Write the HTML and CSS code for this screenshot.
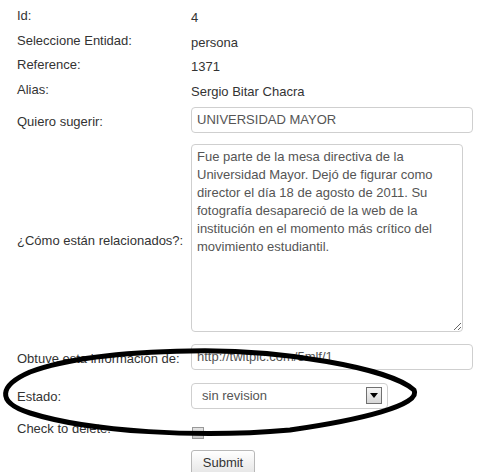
FILE: index.html
```html
<!DOCTYPE html>
<html>
<head>
<meta charset="utf-8">
<link rel="stylesheet" href="styles.css">
</head>
<body>
<form class="form">
  <div class="row text-row"><span class="label">Id:</span><span class="value">4</span></div>
  <div class="row text-row"><span class="label">Seleccione Entidad:</span><span class="value">persona</span></div>
  <div class="row text-row"><span class="label">Reference:</span><span class="value">1371</span></div>
  <div class="row text-row"><span class="label">Alias:</span><span class="value">Sergio Bitar Chacra</span></div>
  <div class="row r-sugerir"><label class="label">Quiero sugerir:</label><input class="input" type="text" value="UNIVERSIDAD MAYOR"></div>
  <div class="row r-textarea"><label class="label">¿Cómo están relacionados?:</label><textarea class="textarea">Fue parte de la mesa directiva de la Universidad Mayor. Dejó de figurar como director el día 18 de agosto de 2011. Su fotografía desapareció de la web de la institución en el momento más crítico del movimiento estudiantil.</textarea></div>
  <div class="row r-url"><label class="label">Obtuve esta información de:</label><input class="input" type="text" value="http://twitpic.com/5mlf/1"></div>
  <div class="row r-estado"><label class="label">Estado:</label><div class="select"><span class="select-text">sin revision</span><span class="arrow"><svg width="8" height="5" viewBox="0 0 8 5"><path d="M0 0 H8 L4 5 Z" fill="#000"/></svg></span></div></div>
  <div class="row r-check"><label class="label">Check to delete:</label><span class="checkbox"></span></div>
  <div class="row r-submit"><span class="label"></span><button class="submit" type="button">Submit</button></div>
</form>
<svg class="ellipse" width="477" height="472" viewBox="0 0 477 472">
  <path d="M190 351 C280 349 390 368 414 390 C422 405 360 420 290 430 C200 438 90 432 30 413 C-5 402 0 385 30 372 C70 357 130 352 190 351 Z" fill="none" stroke="#000" stroke-width="5" stroke-linejoin="round"/>
</svg>
</body>
</html>
```
FILE: styles.css
```css
body {
  margin: 0;
  background: #fff;
  font-family: "Liberation Sans", Arial, sans-serif;
  font-size: 13px;
  color: #333;
  position: relative;
  width: 477px;
  height: 472px;
  overflow: hidden;
}
.form {
  padding: 8px 0 0 17px;
  display: flex;
  flex-direction: column;
}
.row {
  display: flex;
  align-items: center;
}
.label {
  width: 174px;
  flex: none;
  line-height: 15px;
}
.text-row {
  height: 24.67px;
  align-items: flex-start;
}
.value {
  padding-top: 2px;
  line-height: 15px;
}
.input {
  box-sizing: border-box;
  width: 282px;
  height: 26px;
  border: 1px solid #cfcfcf;
  border-radius: 4px;
  padding: 0 5px;
  margin: 0;
  font-family: "Liberation Sans", Arial, sans-serif;
  font-size: 13px;
  color: #555;
  background: #fff;
  outline: none;
}
.r-sugerir { margin-bottom: 11px; }
.r-sugerir .label { margin-top: 3px; }
.textarea {
  box-sizing: border-box;
  width: 272px;
  height: 188px;
  border: 1px solid #cfcfcf;
  border-radius: 4px;
  padding: 3px 5px;
  margin: 0;
  font-family: "Liberation Sans", Arial, sans-serif;
  font-size: 13px;
  line-height: 18px;
  color: #555;
  background: #fff;
  outline: none;
  overflow: hidden;
}
.r-textarea { margin-bottom: 12px; }
.r-textarea .label { margin-top: 5px; }
.r-url { margin-bottom: 13px; }
.r-url .label { margin-top: 3px; }
.select {
  box-sizing: border-box;
  width: 197px;
  height: 26px;
  border: 1px solid #cfcfcf;
  border-radius: 4px;
  padding: 0 5px 0 10px;
  display: flex;
  align-items: center;
  justify-content: space-between;
  color: #555;
}
.arrow {
  box-sizing: border-box;
  width: 16px;
  height: 17px;
  border: 1px solid #707070;
  background: linear-gradient(#f6f6f6, #d6d6d6);
  display: flex;
  align-items: center;
  justify-content: center;
}
.r-estado .label { margin-top: 2px; }
.r-check {
  margin-top: 12px;
  align-items: flex-start;
}
.checkbox {
  box-sizing: border-box;
  width: 12px;
  height: 12px;
  margin-top: 6px;
  margin-left: 1px;
  border: 1px solid #999;
  background: linear-gradient(#e4e4e4, #c8c8c8);
}
.r-submit { margin-top: 11px; }
.submit {
  box-sizing: border-box;
  width: 64px;
  height: 26px;
  margin: 0;
  padding: 0;
  border: 1px solid #b8b8b8;
  border-radius: 3px;
  background: linear-gradient(#ffffff, #e4e4e4);
  font-family: "Liberation Sans", Arial, sans-serif;
  font-size: 13px;
  color: #333;
}
.ellipse {
  position: absolute;
  left: 0;
  top: 0;
  pointer-events: none;
}
```
